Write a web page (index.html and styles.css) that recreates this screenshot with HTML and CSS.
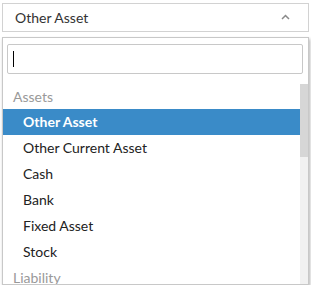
FILE: index.html
```html
<!DOCTYPE html>
<html lang="en">
<head>
  <meta charset="UTF-8">
  <title>Account Type</title>
  <link rel="stylesheet" href="styles.css">
</head>
<body>
  <div class="select">
    <span class="select-value">Other Asset</span>
    <svg class="caret" width="9" height="6" viewBox="0 0 9 6"><path d="M1 5 L4.5 1.5 L8 5" fill="none" stroke="#8a8a8a" stroke-width="1.5"/></svg>
  </div>

  <div class="dropdown">
    <div class="search">
      <div class="search-input"><span class="cursor"></span></div>
    </div>
    <div class="list">
      <ul class="options">
        <li class="group">Assets</li>
        <li class="option active">Other Asset</li>
        <li class="option">Other Current Asset</li>
        <li class="option">Cash</li>
        <li class="option">Bank</li>
        <li class="option">Fixed Asset</li>
        <li class="option">Stock</li>
        <li class="group">Liability</li>
      </ul>
      <div class="scrollbar"><div class="thumb"></div></div>
    </div>
  </div>
</body>
</html>
```

FILE: styles.css
```css
* {
  margin: 0;
  padding: 0;
  box-sizing: border-box;
}

body {
  font-family: Lato, 'Liberation Sans', sans-serif;
  font-size: 14px;
  color: #222;
  background: #fff;
  padding: 3px 2px 0 2px;
}

.select {
  width: 307px;
  height: 29px;
  border: 1px solid #d2d2d2;
  display: flex;
  align-items: center;
  justify-content: space-between;
  padding: 0 18px 0 12px;
}

.select-value {
  color: #333;
}

.caret {
  display: block;
  margin-top: -1px;
}

.dropdown {
  margin-top: 5px;
  width: 307px;
  height: 248px;
  border: 1px solid #c8c8c8;
  box-shadow: 1px 2px 3px rgba(0, 0, 0, 0.3);
  display: flex;
  flex-direction: column;
  overflow: hidden;
}

.search {
  padding: 6px 5px 10px 4px;
}

.search-input {
  display: flex;
  align-items: center;
  height: 30px;
  border: 1px solid #c8c8c8;
  border-radius: 2px;
  padding: 0 5px;
}

.cursor {
  display: block;
  width: 1px;
  height: 16px;
  background: #000;
}

.list {
  flex: 1;
  min-height: 0;
  display: flex;
}

.options {
  list-style: none;
  flex: 1;
  overflow: hidden;
}

.scrollbar {
  width: 8px;
  background: #f1f1f1;
}

.thumb {
  height: 73px;
  background: #d6d6d6;
}

.group {
  height: 25px;
  line-height: 25px;
  padding-left: 10px;
  color: #999;
}

.option {
  height: 26px;
  line-height: 26px;
  padding-left: 20px;
  color: #222;
}

.option.active {
  background: #3a8bc8;
  color: #fff;
  font-weight: 700;
}
```
